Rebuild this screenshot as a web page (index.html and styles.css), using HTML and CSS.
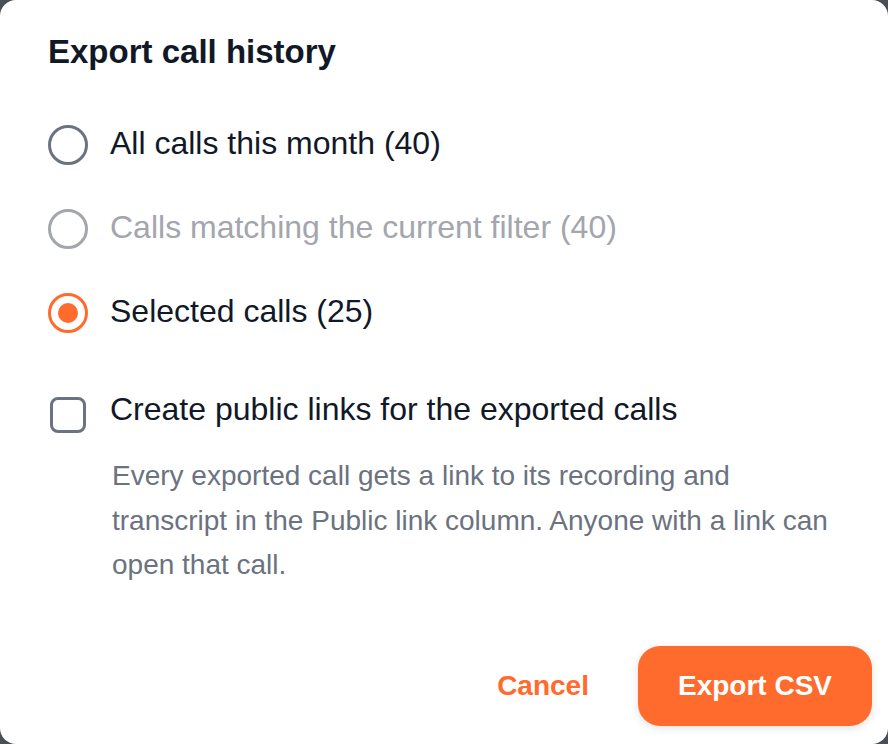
FILE: index.html
```html
<!DOCTYPE html>
<html lang="en">
<head>
<meta charset="utf-8">
<title>Export call history</title>
<link rel="stylesheet" href="styles.css">
</head>
<body>
<div class="dialog">
  <div class="dialog-body">
    <h1 class="title">Export call history</h1>
    <div class="options">
      <label class="option">
        <span class="radio"></span>
        <span class="option-label">All calls this month (40)</span>
      </label>
      <label class="option is-disabled">
        <span class="radio"></span>
        <span class="option-label">Calls matching the current filter (40)</span>
      </label>
      <label class="option is-checked">
        <span class="radio"><span class="radio-dot"></span></span>
        <span class="option-label">Selected calls (25)</span>
      </label>
    </div>
    <div class="check-row">
      <span class="checkbox"></span>
      <div class="check-body">
        <div class="check-label">Create public links for the exported calls</div>
        <p class="check-desc">Every exported call gets a link to its recording and transcript in the Public link column. Anyone with a link can open that call.</p>
      </div>
    </div>
  </div>
  <div class="dialog-footer">
    <button class="btn-cancel" type="button">Cancel</button>
    <button class="btn-export" type="button">Export CSV</button>
  </div>
</div>
</body>
</html>
```

FILE: styles.css
```css
html, body {
  margin: 0;
  padding: 0;
}

body {
  background: #4a4e57;
  font-family: "Liberation Sans", Arial, sans-serif;
  color: #111827;
}

.dialog {
  width: 888px;
  height: 744px;
  background: #ffffff;
  border-radius: 16px;
  display: flex;
  flex-direction: column;
  box-sizing: border-box;
  overflow: hidden;
}

.dialog-body {
  padding: 32px 48px 0 48px;
}

.title {
  margin: 0;
  font-size: 33px;
  line-height: 40px;
  font-weight: 700;
  color: #111827;
}

.options {
  margin-top: 51px;
  display: flex;
  flex-direction: column;
  gap: 44px;
}

.option {
  display: flex;
  align-items: flex-start;
  height: 40px;
}

.radio {
  width: 40px;
  height: 40px;
  box-sizing: border-box;
  border: 3px solid #6b7280;
  border-radius: 50%;
  margin-top: 2px;
  margin-right: 22px;
  flex: none;
  display: flex;
  align-items: center;
  justify-content: center;
}

.option-label {
  font-size: 32px;
  line-height: 40px;
  color: #111827;
}

.option.is-disabled .radio {
  border-color: #a3a6ad;
}

.option.is-disabled .option-label {
  color: #a3a6ad;
}

.option.is-checked .radio {
  border-color: #ff6b2c;
}

.radio-dot {
  width: 20px;
  height: 20px;
  border-radius: 50%;
  background: #ff6b2c;
}

.check-row {
  margin-top: 58px;
  display: flex;
  align-items: flex-start;
}

.checkbox {
  width: 36px;
  height: 36px;
  box-sizing: border-box;
  border: 3px solid #6b7280;
  border-radius: 8px;
  margin-top: 8px;
  margin-left: 2px;
  margin-right: 24px;
  flex: none;
}

.check-body {
  flex: 1;
}

.check-label {
  font-size: 32px;
  line-height: 40px;
  color: #111827;
}

.check-desc {
  margin: 25px 0 0 2px;
  font-size: 28px;
  line-height: 44.6px;
  color: #6b7280;
}

.dialog-footer {
  margin-top: auto;
  padding: 0 16px 18px 16px;
  display: flex;
  justify-content: flex-end;
  align-items: center;
  gap: 25px;
}

.btn-cancel,
.btn-export {
  font-family: "Liberation Sans", Arial, sans-serif;
  font-size: 28px;
  font-weight: 700;
  border: none;
  height: 80px;
  cursor: pointer;
}

.btn-cancel {
  background: transparent;
  color: #ff6b2c;
  padding: 0 24px;
}

.btn-export {
  background: #ff6b2c;
  color: #ffffff;
  padding: 0 40px;
  border-radius: 22px;
  box-shadow: 0 2px 8px rgba(0, 0, 0, 0.12);
}
```
